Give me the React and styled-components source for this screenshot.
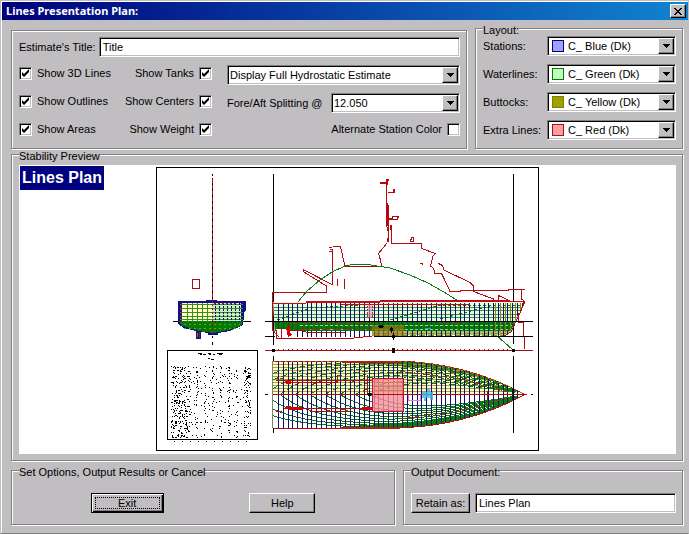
import React, { useState } from 'react';
import styled, { createGlobalStyle } from 'styled-components';

const GlobalStyle = createGlobalStyle`
  * {
    box-sizing: border-box;
  }
  body {
    margin: 0;
    background: #c0bec0;
  }
  body, input, select, button {
    font-family: "Liberation Sans", Arial, sans-serif;
    font-size: 11px;
    color: #000;
  }
`;
const Window = styled.div`
  min-height: 100vh;
  display: flex;
  flex-direction: column;
  background: #c0bec0;
  border: 1px solid #c0bec0;
  border-bottom-color: #808080;
  box-shadow: inset 1px 1px #fff;
  padding: 1px 0 0 1px;
`;
const TitleBar = styled.header`
  display: flex;
  align-items: center;
  justify-content: space-between;
  height: 18px;
  padding: 0 2px 0 4px;
  background: linear-gradient(to right, #00007b, #1084d0);
`;
const Title = styled.h1`
  margin: 0;
  font-family: "Noto Sans", sans-serif;
  font-size: 11px;
  line-height: 18px;
  font-weight: 700;
  color: #fff;
`;
const raised = `
  background: #c0bec0;
  border: 1px solid;
  border-color: #fff #000 #000 #fff;
  box-shadow: inset -1px -1px #808080;
`;
const sunken = `
  background: #fff;
  border: 1px solid;
  border-color: #808080 #fff #fff #808080;
  box-shadow: inset 1px 1px #000, inset -1px -1px #c0bec0;
`;
const CloseButton = styled.button`
  ${raised}
  display: flex;
  align-items: center;
  justify-content: center;
  width: 16px;
  height: 14px;
  padding: 0;
`;
const Content = styled.main`
  flex: 1;
  display: flex;
  flex-direction: column;
  padding: 3px 5px 8px 9px;
`;
const Columns = styled.div`
  display: grid;
  grid-template-columns: ${({ $cols }) => $cols};
  column-gap: 8px;
`;
const Group = styled.fieldset`
  min-width: 0;
  margin: ${({ $top }) => $top || 0}px 0 0;
  padding: ${({ $pad }) => $pad || '6px 6px 6px 7px'};
  border: 1px solid #808080;
  box-shadow: inset 1px 1px #fff, 1px 1px #fff;
`;
const Legend = styled.legend`
  height: 8px;
  padding: 0;
  line-height: 12px;
  background: #c0bec0;
`;
const TitleRow = styled.div`
  display: flex;
  align-items: center;
  gap: 3px;
  margin-bottom: 8px;
`;
const Options = styled.div`
  display: grid;
  grid-template-columns: 193px minmax(0, 1fr);
  grid-auto-rows: 20px;
  gap: 8px 15px;
`;
const Pair = styled.div`
  display: flex;
  justify-content: ${({ $end }) => ($end ? 'flex-end' : 'space-between')};
  height: 16px;
`;
const Check = styled.label`
  display: flex;
  align-items: center;
  gap: 5px;
`;
const CheckBox = styled.input`
  ${sunken}
  appearance: none;
  width: 13px;
  height: 13px;
  margin: 0;
  &:checked {
    background: #fff url("data:image/svg+xml,%3Csvg xmlns='http://www.w3.org/2000/svg' width='11' height='11'%3E%3Cpath d='M2 4v3l2 2 5-5V1L4 6z'/%3E%3C/svg%3E");
  }
`;
const SplitRow = styled.div`
  display: grid;
  grid-template-columns: minmax(0, 1fr) 129px;
  align-items: center;
`;
const TextBox = styled.input`
  ${sunken}
  flex: 1;
  min-width: 0;
  height: 20px;
  padding: 0 3px;
  outline: none;
`;
const ComboFrame = styled.div`
  ${sunken}
  display: grid;
  grid-template-columns: minmax(0, 1fr);
  align-items: center;
  height: 20px;
  padding: 1px;
  > * {
    grid-area: 1 / 1;
  }
`;
const Select = styled.select`
  appearance: none;
  width: 100%;
  height: 16px;
  border: none;
  outline: none;
  padding: 0 20px 0 ${({ $swatch }) => ($swatch ? 19 : 1)}px;
  background: transparent;
`;
const Arrow = styled.span`
  ${raised}
  justify-self: end;
  display: flex;
  align-items: center;
  justify-content: center;
  width: 16px;
  height: 16px;
  pointer-events: none;
`;
const Swatch = styled.span`
  width: 12px;
  height: 12px;
  margin-left: 3px;
  background: ${({ $fill }) => $fill};
  border: 1px solid ${({ $line }) => $line};
  pointer-events: none;
`;
const LayoutRows = styled.div`
  display: grid;
  grid-template-columns: 64px minmax(0, 1fr);
  grid-auto-rows: 20px;
  gap: 8px 0;
  align-items: center;
`;
const Preview = styled.div`
  position: relative;
  min-height: 289px;
  display: flex;
  justify-content: center;
  align-items: center;
  background: #fff;
`;
const PlanName = styled.h2`
  position: absolute;
  top: 1px;
  left: 1px;
  margin: 0;
  padding: 0 2px;
  font-size: 16px;
  line-height: 24px;
  font-weight: 700;
  color: #fff;
  background: #000080;
`;
const Actions = styled.div`
  display: grid;
  grid-template-columns: ${({ $cols }) => $cols};
  column-gap: 5px;
  justify-items: ${({ $center }) => ($center ? 'center' : 'stretch')};
  padding: 13px 0 5px;
`;
const Button = styled.button`
  ${raised}
  width: ${({ $width }) => $width}px;
  height: 20px;
  padding: 0;
`;
const DefaultButton = styled(Button)`
  border-color: #000;
  box-shadow: inset 1px 1px #fff, inset -1px -1px #000, inset -2px -2px #808080;
  padding: 3px;
  > span {
    display: block;
    border: 1px dotted #000;
    line-height: 10px;
  }
`;

const colors = [
  { label: 'Stations:', value: 'C_ Blue (Dk)', fill: '#a0a0ff', line: '#000080' },
  { label: 'Waterlines:', value: 'C_ Green (Dk)', fill: '#c0ffc0', line: '#008000' },
  { label: 'Buttocks:', value: 'C_ Yellow (Dk)', fill: '#a0a000', line: '#808000' },
  { label: 'Extra Lines:', value: 'C_ Red (Dk)', fill: '#ffa0a0', line: '#b01010' },
];

const RED = '#b00c10';
const GREEN = '#0a7a12';
const BLUE = '#10106a';
const OLIVE = '#8c8414';

// hull geometry
const STERN = 273;
const BOW = 525;
const CENTER = 394.5;

const range = (from, to, step) => {
  const out = [];
  for (let v = from; v <= to; v += step) out.push(v);
  return out;
};
const vLines = (xs, y1, y2) => xs.map((x) => `M${Math.round(x) + 0.5} ${y1}V${y2}`).join('');
const hLines = (ys, x1, x2) => ys.map((y) => `M${x1} ${Math.round(y) + 0.5}H${x2}`).join('');

const halfBreadth = (x, start = 0.45, power = 2.2) => {
  const t = (x - STERN) / (BOW - STERN);
  const u = Math.max(0, (t - start) / (1 - start));
  return 33.5 * Math.max(0, 1 - u ** power);
};
const curve = (fn, from, to) =>
  range(from, to, 4)
    .map((x, i) => `${i ? 'L' : 'M'}${x} ${fn(x).toFixed(1)}`)
    .join('');

const deckEdge = (side) => curve((x) => CENTER + side * halfBreadth(x), STERN, BOW);
const hullShape = `${deckEdge(-1)}${range(STERN, BOW, 4)
  .reverse()
  .map((x) => `L${x} ${(CENTER + halfBreadth(x)).toFixed(1)}`)
  .join('')}Z`;

const waterline = (side, k) => {
  const from = STERN - 38 + k * 15;
  const start = 0.42 - k * 0.012;
  const power = 2.1 - k * 0.06;
  const reach = 1 - k * 0.045;
  return curve(
    (x) => CENTER + side * halfBreadth(x, start, power) * (1 - Math.exp(-(x - from) / 38)) * reach,
    Math.max(STERN, from),
    BOW - 8
  );
};
const waterlines = (side, count) => range(0, count, 1).map((k) => waterline(side, k)).join('');
const edgeBand = (side) => {
  const outer = range(345, BOW, 4);
  return `M${outer.map((x) => `${x} ${(CENTER + side * halfBreadth(x)).toFixed(1)}`).join('L')}L${outer
    .slice()
    .reverse()
    .map((x) => `${x} ${(CENTER + side * halfBreadth(x) * (1 - 0.14 * Math.sin(((x - 345) / 180) * Math.PI) - 0.04)).toFixed(1)}`)
    .join('L')}Z`;
};

// numbers of the results sheet, too small to be legible
const sheetDots = () => {
  let seed = 7;
  const rnd = () => {
    seed = (seed * 16807) % 2147483647;
    return seed / 2147483647;
  };
  let d = '';
  range(366, 437, 1).forEach((y) => {
    const blank = y % 5 === 4 || [388, 398, 417].includes(y);
    range(171, 250, 1).forEach((x) => {
      const dense = x < 187 || x > 243;
      const column = (x - 188) % 8 < 2;
      const p = blank ? 0.04 : dense ? 0.24 : column ? 0.22 : 0.03;
      if (rnd() < p) d += `M${x} ${y}h1v1h-1z`;
    });
  });
  return d;
};

const stations = (y1, y2) => vLines(range(278, 523, 4.78), y1, y2);

const BodyPlan = () => (
  <g fill="none">
    <path d="M212.5 174v2M212.5 178V300" stroke="#000" />
    <path d="M212.5 179V300" stroke={RED} strokeDasharray="4 2" />
    <rect x="192.5" y="279.5" width="7" height="9" stroke={RED} />
    <path d="M173 321.5H180M243 321.5H251M212.5 336v2M212.5 342v3" stroke="#000" />
    <path d="M178 301H206V300H217V301H246V310L244 312L243 325L230 331L218 333V335H208V333L201 332V339H196V331L184 328L178 324Z" fill="#10108c" />
    <path d="M182 303H212V322H182Z" fill="#ffffc8" />
    <path d="M212 303H241V321H212Z" fill="#c8ecc8" />
    <path d="M179 321H243L241 326L228 330L214 333L198 331L181 325Z" fill="#067806" />
    <path d={hLines([304, 308, 312, 316, 319], 180, 243)} stroke="#3c8c1c" />
    <path d={vLines(range(187, 210, 5), 303, 322)} stroke="#3c8c1c" />
    <path d={vLines(range(215, 243, 4), 303, 322)} stroke={BLUE} strokeDasharray="2 1" />
    <path d={hLines([324, 328], 184, 240)} stroke="#58a818" strokeDasharray="2 3" />
    <path d="M181.5 304V322M212.5 300V334M214 303.5H236" stroke={RED} strokeDasharray="2 2" />
    <path d="M199.5 332V338" stroke={RED} />
    <path d="M197.5 333V337" stroke={OLIVE} />
  </g>
);

const ResultSheet = () => (
  <g>
    <rect x="167.5" y="350.5" width="90" height="89" fill="#fff" stroke="#000" />
    <path
      d="M198 353h4v1h-4zM203 354h3v1h-3zM208 353h3v1h-3zM213 354h2v1h-2zM217 353h6v1h-6zM200 354h2v1h-2zM209 354h2v1h-2zM219 354h3v1h-3zM208 358h2v1h-2zM211 359h3v1h-3z"
      fill="#000"
    />
    <path d={sheetDots()} fill="#000" />
    <path d={range(174, 246, 8).map((x) => `M${x} 441h1v1h-1z`).join('')} fill="#000" />
  </g>
);

const Profile = () => (
  <g fill="none">
    <path d="M273.5 174V345M513.5 174V302M513.5 321V344" stroke="#000" />
    <path
      d="M272.5 321V292.5H326.5V286M303 269.5L332 284.5M303 271.5L326.5 286M303 269.5V271.5M332.5 284.5V249.5H329.5M329 247.5H332M329 251.5H332M332.5 246.5H340.5L345 266.5H381.5L380.5 260L378.5 253.5L387.5 242.5L388.5 233L386.5 225V180M391.5 225V243.5H421.5V248.5L435.5 253.5L433 256L430.5 266L433.5 268.5L435 273.5H441.5L444 278.5L450 291.5L460 291.5V290.5H508.5V289.5H524.5M438.5 263.5L442.5 265.5L444 270L470 282.5L473.5 286V291.5L493.5 299V303M498.5 303V295.5L508 300M521.5 289V300M337.5 279V286M344.5 279V289M420 263.5H422.5V264.5"
      stroke={RED}
    />
    <path d="M386 179h3v2h-1v4h-1v18h1v15h1v8h-2v-42h-7v-2h6zM388 192h5v-3h2v4h-7zM389 218h4v2h-4zM390 225h2v5h-2z" fill="#c40008" />
    <path d="M388.5 205V242M392.5 216.5H398.5L397 219.5H392.5ZM411.5 237.5H413.5V241.5H410.5Z" stroke={RED} />
    <path
      d="M277 321L288 313L298 302L307 291L320 280L332 272L345 266L352 264.5H368L390 268L410 275L427 282.5L443 291.5L461 302.5L478 319L496 335L513 350"
      stroke={GREEN}
    />
    <clipPath id="side">
      <path d="M273 301H525L522 308L517 317L511 331L504 337H465L372 337H275Z" />
    </clipPath>
    <g clipPath="url(#side)">
      <path d="M273 302H525V322H273Z" fill="#e6fae6" />
      <path d="M273 322H520V331H273Z" fill="#067a06" />
      <path d="M273 331H520V338H273Z" fill="#fff" />
      <path d="M404 331H512V335H404Z" fill="#a8c070" />
      <path d={hLines([307, 310, 314, 317], 273, 522)} stroke="#3c9048" />
      <path d={hLines([333, 335], 374, 512)} stroke={OLIVE} strokeDasharray="6 3" />
      <path d="M277 320L310 308L360 305M390 320L440 305H520M440 319L490 306" stroke={GREEN} strokeDasharray="3 2" />
      <path d={stations(303, 322)} stroke={BLUE} />
      <path d={stations(322, 331)} stroke={BLUE} strokeOpacity=".4" />
      <path d={stations(331, 338)} stroke={BLUE} />
      <path d={hLines([325, 329], 300, 512)} stroke="#a0d0a0" strokeDasharray="3 2" />
      <path d="M290 323.5H372M300 329.5H372M440 323.5H465" stroke="#8c3c10" strokeDasharray="8 3" />
      <path d={vLines(range(495, 522, 5), 303, 332)} stroke={OLIVE} />
      <path d="M372 325H404V336H372Z" fill="#8c7410" fillOpacity=".75" />
      <path d="M276 329H288V337H276ZM292 331H296V337H292Z" fill="#fff" />
    </g>
    <path d="M273 303.5H306M306 302.5H380M306 301.5H524M341 304.5H470" stroke="#cc0810" />
    <path d="M380 300.5H510" stroke="#b80c14" />
    <path d="M525 302L518 317L511 332L504 336M276 330V338.5H350L372 336M281 328V338M290 330H300L306 332H345M521 298L525 302L522 304M272.5 303V330L279 337" stroke={RED} />
    <path d="M286 328L290 325V333L292 335L288 337Z" fill="#d40008" />
    <rect x="367.5" y="304.5" width="5" height="13" fill="#f0a0b0" fillOpacity=".6" stroke="#c02040" strokeDasharray="2 1" />
    <path d="M518.5 313V322H523.5L524.5 349" stroke={RED} />
    <path d="M265 321.5H533M265 336.5H275M374 336.5H533" stroke="#000" />
    <path d="M265 350.5H533" stroke="#a01018" />
    <path d={vLines(range(278, 508, 4.78), 349, 350)} stroke="#a01018" />
    <path d="M379 325h4v3h-4zM390 328h3v3h-3zM392 335h3v3h-3zM392 348h3v5h-3zM272 349h3v3h-3zM512 349h3v3h-3z" fill="#000" />
    <path d="M378 326.5H384M391.5 327V333M393.5 333V340" stroke="#000" />
    <path d="M425 328.5H431" stroke="#20a0c0" />
  </g>
);

const PlanView = () => (
  <g fill="none">
    <clipPath id="deck">
      <path d={hullShape} />
    </clipPath>
    <g clipPath="url(#deck)">
      <path d="M273 361H525V394H273Z" fill="#fffbd0" />
      <path d={edgeBand(1)} fill="#0a7a12" />
      <path d={edgeBand(-1)} fill="#5a7a14" />
      <path d={hLines(range(364, 392, 3), 273, 525)} stroke="#a8a044" />
      <path d={waterlines(1, 9)} stroke={GREEN} />
      <path d={waterlines(-1, 9)} stroke={GREEN} strokeDasharray="6 3" />
      <path d={stations(361, 429)} stroke={BLUE} />
      <path d="M400 371L460 379L510 392M400 419L460 411L510 397" stroke="#a03010" strokeDasharray="5 2" />
    </g>
    <path d={`${deckEdge(-1)}${deckEdge(1)}`} stroke={RED} />
    <path d={deckEdge(-1)} stroke={OLIVE} strokeDasharray="2 4" />
    <path d="M273 394.5H527" stroke={RED} />
    <path d="M272.5 361V428" stroke="#808070" />
    <path d="M342 361.5H400M340 427.5H400" stroke="#b02010" strokeWidth="2" />
    <path d="M276 380.5H372M284 382.5H337M284 408.5H372M310 411.5H348M367.5 375V395M337.5 375V383M345.5 407V414M280 378.5H284M276 411.5H282M487.5 391V400" stroke={RED} />
    <path d="M286 380h5v4h-5zM286 406h5v3h-5zM290 407h12v3h-12zM362 407h10v3h-10z" fill="#d40008" />
    <path d="M372 378H404V411H372Z" fill="#f89098" fillOpacity=".8" />
    <rect x="372.5" y="378.5" width="31" height="33" stroke="#c01040" />
    <path d={hLines([382, 386, 390], 374, 403)} stroke="#d07850" />
    <path d="M374 394.5H403" stroke={RED} />
    <path d="M408.5 395V400.5H420.5V395" stroke="#e878e8" />
    <path d="M422 392h11v8h-3v-2h-4v3h-2v-3h-2zM427 389h3v3h-3z" fill="#38b4e8" fillOpacity=".8" />
    <path d="M368 393h3v3h-3z" fill="#000" />
    <path d="M367 394.5H372M369.5 391V397M265 394.5H268M531 394.5H533M273.5 356V361M273.5 428V433M513.5 356V433" stroke="#000" />
  </g>
);

const ShipDrawing = () => (
  <svg width="383" height="285" viewBox="156 167 383 285" shapeRendering="crispEdges" role="img" aria-label="Lines plan">
    <rect x="156.5" y="167.5" width="382" height="283" fill="#fff" stroke="#000" />
    <BodyPlan />
    <ResultSheet />
    <Profile />
    <PlanView />
  </svg>
);

const Combo = ({ id, options, swatch, label }) => (
  <ComboFrame>
    {swatch && <Swatch $fill={swatch.fill} $line={swatch.line} />}
    <Select id={id} aria-label={label} $swatch={!!swatch}>
      {options.map((o) => (
        <option key={o}>{o}</option>
      ))}
    </Select>
    <Arrow>
      <svg width="7" height="4" shapeRendering="crispEdges">
        <path d="M0 0H7V1H6V2H5V3H4V4H3V3H2V2H1V1H0Z" />
      </svg>
    </Arrow>
  </ComboFrame>
);

const App = () => {
  const [title, setTitle] = useState('Title');
  const [output, setOutput] = useState('Lines Plan');
  return (
    <>
      <GlobalStyle />
      <Window>
        <TitleBar>
          <Title>Lines Presentation Plan:</Title>
          <CloseButton aria-label="Close">
            <svg width="8" height="7" shapeRendering="crispEdges">
              <path d="M0 0h2v1h1v1h2v-1h1v-1h2v1h-1v1h-1v1h-1v1h1v1h1v1h1v1h-2v-1h-1v-1h-2v1h-1v1h-2v-1h1v-1h1v-1h1v-1h-1v-1h-1v-1h-1z" />
            </svg>
          </CloseButton>
        </TitleBar>
        <Content>
          <Columns $cols="minmax(0, 1fr) 208px">
            <Group $top={7} $pad="6px 6px 7px 7px">
              <TitleRow>
                <label htmlFor="title">Estimate's Title:</label>
                <TextBox id="title" value={title} onChange={(e) => setTitle(e.target.value)} />
              </TitleRow>
              <Options>
                <Pair>
                  <Check><CheckBox type="checkbox" defaultChecked />Show 3D Lines</Check>
                  <Check>Show Tanks<CheckBox type="checkbox" defaultChecked /></Check>
                </Pair>
                <Combo id="report" label="Report" options={['Display Full Hydrostatic Estimate']} />
                <Pair>
                  <Check><CheckBox type="checkbox" defaultChecked />Show Outlines</Check>
                  <Check>Show Centers<CheckBox type="checkbox" defaultChecked /></Check>
                </Pair>
                <SplitRow>
                  <label htmlFor="split">Fore/Aft Splitting @</label>
                  <Combo id="split" options={['12.050']} />
                </SplitRow>
                <Pair>
                  <Check><CheckBox type="checkbox" defaultChecked />Show Areas</Check>
                  <Check>Show Weight<CheckBox type="checkbox" defaultChecked /></Check>
                </Pair>
                <Pair $end>
                  <Check>Alternate Station Color<CheckBox type="checkbox" /></Check>
                </Pair>
              </Options>
            </Group>
            <Group $top={1} $pad="4px 6px 6px 7px">
              <Legend>Layout:</Legend>
              <LayoutRows>
                {colors.map((c, i) => (
                  <React.Fragment key={c.label}>
                    <label htmlFor={`color-${i}`}>{c.label}</label>
                    <Combo id={`color-${i}`} swatch={c} options={[c.value]} />
                  </React.Fragment>
                ))}
              </LayoutRows>
            </Group>
          </Columns>
          <Group $top={1} $pad="7px 6px 6px 7px">
            <Legend>Stability Preview</Legend>
            <Preview>
              <PlanName>Lines Plan</PlanName>
              <ShipDrawing />
            </Preview>
          </Group>
          <Columns $cols="minmax(0, 384fr) minmax(0, 280fr)">
            <Group $top={5}>
              <Legend>Set Options, Output Results or Cancel</Legend>
              <Actions $cols="217fr 84fr 59fr" $center>
                <DefaultButton $width={73}><span>Exit</span></DefaultButton>
                <Button $width={66}>Help</Button>
              </Actions>
            </Group>
            <Group $top={5}>
              <Legend>Output Document:</Legend>
              <Actions $cols="auto minmax(0, 1fr)">
                <Button $width={59}>Retain as:</Button>
                <TextBox aria-label="Output document" value={output} onChange={(e) => setOutput(e.target.value)} />
              </Actions>
            </Group>
          </Columns>
        </Content>
      </Window>
    </>
  );
};

export default App;
